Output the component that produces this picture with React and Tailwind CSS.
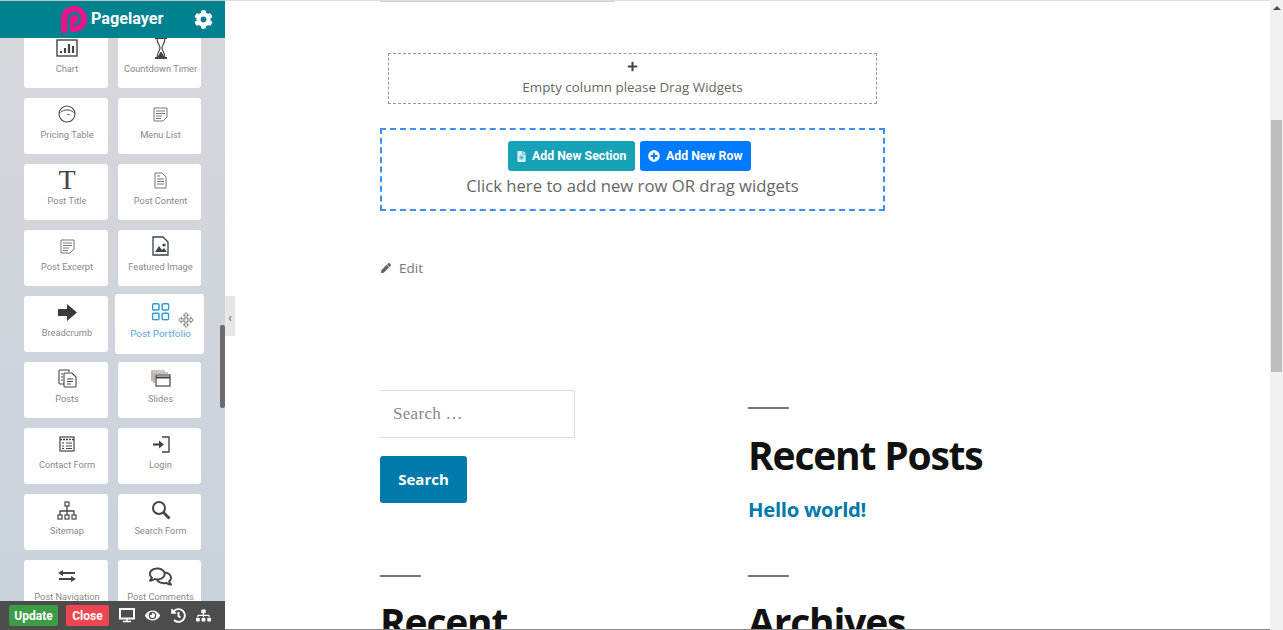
import React from "react";
import { FaCog, FaRegComments, FaEye, FaHistory, FaSitemap, FaPen, FaPlus, FaPlusCircle, FaFileAlt } from "react-icons/fa";

const Svg = ({ w = 24, h = 24, children, className = "text-[#444]" }) => (
  <svg width={w} height={h} viewBox={`0 0 ${w} ${h}`} fill="none" stroke="currentColor" className={className}>
    {children}
  </svg>
);

const ChartIcon = () => (
  <Svg w={22} h={18}>
    <rect x="1" y="1" width="20" height="16" strokeWidth="1.4" />
    <path d="M5 14v-2M9 14V9M13 14V5M17 14V7" strokeWidth="2.2" />
  </Svg>
);
const HourglassIcon = () => (
  <Svg w={14} h={22}>
    <path d="M1 1h12M1 21h12" strokeWidth="2" />
    <path d="M3 1c0 6 3 7 3 10s-3 4-3 10M11 1c0 6-3 7-3 10s3 4 3 10" strokeWidth="1.2" />
    <path d="M4 20l3-5 3 5z" fill="currentColor" />
  </Svg>
);
const GaugeIcon = () => (
  <Svg w={18} h={18}>
    <circle cx="9" cy="9" r="8" strokeWidth="1.1" />
    <path d="M2.5 7.500C6 4 12 4 15.500 7.500" strokeWidth="1" />
    <path d="M9 9l3 1" strokeWidth="0.8" />
  </Svg>
);
const ListNoteIcon = () => (
  <Svg w={15} h={15} className="text-[#777]">
    <path d="M1 1h13v9l-4 4H1z" strokeWidth="1" />
    <path d="M3 4h9M3 6.500h9M3 9h6M3 11.500h5" strokeWidth="1" />
  </Svg>
);
const FileIcon = () => (
  <Svg w={13} h={17} className="text-[#777]">
    <path d="M1 1h7l4 4v11H1z" strokeWidth="1" />
    <path d="M3 7h7M3 9.500h7M3 12h7M3 4h3" strokeWidth="1" />
  </Svg>
);
const ImageFileIcon = () => (
  <Svg w={17} h={20}>
    <path d="M1 1h10l5 5v13H1z" strokeWidth="1.300" className="text-[#345]" />
    <path d="M3 16l4-6 3 4 2-2 3 4z" fill="currentColor" stroke="none" />
    <circle cx="12" cy="9" r="1.600" fill="currentColor" stroke="none" />
  </Svg>
);
const BlockArrowIcon = () => (
  <svg width="19" height="17" viewBox="0 0 19 17" fill="#3a3a3a">
    <path d="M0 5h9V0l10 8.500L9 17v-5H0z" />
  </svg>
);
const GridIcon = () => (
  <Svg w={17} h={17} className="text-[#2d9bdc]">
    <rect x="1" y="1" width="6" height="6" rx="1" strokeWidth="1.400" />
    <rect x="10" y="1" width="6" height="6" rx="1" strokeWidth="1.400" />
    <rect x="1" y="10" width="6" height="6" rx="1" strokeWidth="1.400" />
    <rect x="10" y="10" width="6" height="6" rx="1" strokeWidth="1.400" />
  </Svg>
);
const PostsIcon = () => (
  <Svg w={19} h={19}>
    <path d="M11 3V1H2a1 1 0 0 0-1 1v12a1 1 0 0 0 1 1h4" strokeWidth="1.100" />
    <path d="M7 4h7l4 4v9a1 1 0 0 1-1 1H7a1 1 0 0 1-1-1V5a1 1 0 0 1 1-1z" strokeWidth="1.100" />
    <path d="M9 10h6M9 12.500h6M9 15h4M3 5h2M3 8h2M3 11h2" strokeWidth="1" />
  </Svg>
);
const SlidesIcon = () => (
  <Svg w={20} h={17}>
    <path d="M1 11V1h13" strokeWidth="1.200" className="text-[#a8856c]" />
    <path d="M3 13V3h14" strokeWidth="1.200" className="text-[#888]" />
    <rect x="5" y="5" width="14" height="11" strokeWidth="1.200" />
    <path d="M5 7.500h14" strokeWidth="2" />
  </Svg>
);
const FormIcon = () => (
  <Svg w={16} h={16}>
    <rect x="1" y="1" width="14" height="14" strokeWidth="1.200" />
    <path d="M1 3.500h14" strokeWidth="1.600" strokeDasharray="2 1" />
    <path d="M3 7h2M7 7h6M3 10h2M7 10h6M3 12.500h2M7 12.500h6" strokeWidth="1" />
  </Svg>
);
const LoginIcon = () => (
  <Svg w={18} h={17}>
    <path d="M10 1h7v15h-7" strokeWidth="1.400" />
    <path d="M1 8.500h6" strokeWidth="2.200" />
    <path d="M7 4.500l5 4-5 4z" fill="currentColor" stroke="none" />
  </Svg>
);
const SitemapIcon = () => (
  <Svg w={20} h={19}>
    <rect x="8" y="1" width="4" height="4" strokeWidth="1.200" />
    <rect x="1" y="14" width="4" height="4" strokeWidth="1.200" />
    <rect x="8" y="14" width="4" height="4" strokeWidth="1.200" />
    <rect x="15" y="14" width="4" height="4" strokeWidth="1.200" />
    <path d="M10 5v9M3 14v-4h14v4" strokeWidth="1.300" />
  </Svg>
);
const SearchGlassIcon = () => (
  <Svg w={20} h={20}>
    <circle cx="8" cy="8" r="6" strokeWidth="2" />
    <path d="M12.500 12.500L18.500 18.500" strokeWidth="2.800" />
  </Svg>
);
const SwapIcon = () => (
  <Svg w={18} h={12}>
    <path d="M5 3h12M1 9h12" strokeWidth="2" />
    <path d="M5 0L0 3l5 3zM13 6l5 3-5 3z" fill="currentColor" stroke="none" />
  </Svg>
);
const Logo = () => (
  <svg width="26" height="27" viewBox="0 0 26 27">
    <circle cx="13" cy="13" r="13" fill="#e9148c" />
    <rect x="0" y="13" width="6.500" height="14" rx="1" fill="#e9148c" />
    <path d="M7.800 27V13a5.500 5.500 0 1 1 5.500 5.500" fill="none" stroke="#00818f" strokeWidth="2.800" />
  </svg>
);
const MoveCursor = () => (
  <svg width="16" height="16" viewBox="0 0 16 16" fill="#fff" stroke="#555" strokeWidth="0.800">
    <path d="M8 .6l2.600 2.800H9v3.600h3.600V5.400L15.400 8l-2.800 2.600V9H9v3.600h1.600L8 15.400l-2.600-2.800H7V9H3.400v1.600L.6 8l2.800-2.600V7H7V3.400H5.400z" />
  </svg>
);

const widgets = [
  { label: "Chart", icon: <ChartIcon /> },
  { label: "Countdown Timer", icon: <HourglassIcon /> },
  { label: "Pricing Table", icon: <GaugeIcon /> },
  { label: "Menu List", icon: <ListNoteIcon /> },
  { label: "Post Title", icon: <span className="font-['Liberation_Serif'] text-[28px] leading-6 text-[#444]">T</span> },
  { label: "Post Content", icon: <FileIcon /> },
  { label: "Post Excerpt", icon: <ListNoteIcon /> },
  { label: "Featured Image", icon: <ImageFileIcon /> },
  { label: "Breadcrumb", icon: <BlockArrowIcon /> },
  { label: "Post Portfolio", icon: <GridIcon />, active: true },
  { label: "Posts", icon: <PostsIcon /> },
  { label: "Slides", icon: <SlidesIcon /> },
  { label: "Contact Form", icon: <FormIcon /> },
  { label: "Login", icon: <LoginIcon /> },
  { label: "Sitemap", icon: <SitemapIcon /> },
  { label: "Search Form", icon: <SearchGlassIcon /> },
  { label: "Post Navigation", icon: <SwapIcon /> },
  { label: "Post Comments", icon: <FaRegComments size={23} className="text-[#444]" /> },
];

const Sidebar = () => (
  <aside className="relative w-[225px] h-[630px] shrink-0 flex flex-col bg-gradient-to-b from-[#d6d8db] to-[#c9d2dc] font-['Roboto',sans-serif]">
    <header className="h-[38px] shrink-0 bg-[#00818f] border-t border-[#b9c4c6] flex items-center pl-[61px] pr-[12px] relative z-10">
      <Logo />
      <span className="ml-[4px] text-[16.200px] font-bold text-white leading-none">Pagelayer</span>
      <FaCog size={19} className="ml-auto text-white" />
    </header>
    <div className="flex-1 overflow-hidden">
      <div className="grid grid-cols-[84px_83px] gap-[10px] pl-6 mt-[-6px]">
        {widgets.map((w) => (
          <div
            key={w.label}
            className={`h-14 bg-white rounded-[3px] flex flex-col items-center pt-[4px] pl-[2px] ${w.active ? "scale-[1.07] text-[#5aa5da]" : "text-[#8a8a8a]"}`}
          >
            <div className="h-6 flex items-center justify-center">{w.icon}</div>
            <span className="mt-[3.500px] text-[9.250px] leading-[10px] whitespace-nowrap">{w.label}</span>
          </div>
        ))}
      </div>
    </div>
    <footer className="h-[29px] shrink-0 bg-[#4d4d4d] flex items-center pl-[9px] text-white">
      <button className="h-[21px] w-[49px] bg-[#3d9c46] rounded-[2px] text-[12px] font-bold">Update</button>
      <button className="ml-2 h-[21px] w-[43px] bg-[#ef4550] rounded-[2px] text-[12px] font-bold">Close</button>
      <svg width="16" height="15" viewBox="0 0 16 15" fill="none" stroke="#fff" className="ml-[10px]">
        <rect x="1" y="1" width="14" height="9.500" strokeWidth="2" />
        <path d="M8 11v2M4 13.500h8" strokeWidth="1.500" />
      </svg>
      <FaEye size={15} className="ml-[10px]" />
      <FaHistory size={15} className="ml-[11px]" />
      <FaSitemap size={15} className="ml-[10px]" />
    </footer>
    {/* sidebar scroll thumb */}
    <div className="absolute left-[220px] top-[325px] w-[5px] h-[83px] bg-[#6b6b6b] rounded-[2px]" />
    {/* collapse handle */}
    <div className="absolute left-[225px] top-[296px] w-[10px] h-[40px] bg-[#e4e6e8] flex items-center justify-center pt-[3px] text-[#3f5a78] text-[12px] z-10">‹</div>
    <div className="absolute left-[178px] top-[312px] z-20">
      <MoveCursor />
    </div>
  </aside>
);

const Rule = () => <div className="w-[41px] h-[2px] bg-[#767676]" />;

const Main = () => (
  <main className="flex-1 h-[630px] overflow-hidden bg-white border-t border-b border-t-[#ddd] border-b-[#888] font-['Open_Sans',sans-serif] pl-[155px]">
    <div className="w-[235px] h-px bg-[#c8d2da]" />
    <div className="w-[505px] mt-[51px]">
      <div className="ml-2 w-[489px] h-[51px] border border-dashed border-[#999] flex flex-col items-center pt-[6px] text-[#666]">
        <FaPlus size={11} className="text-[#444] mt-[1px]" />
        <span className="mt-[6px] text-[13.400px] leading-[18px]">Empty column please Drag Widgets</span>
      </div>
      <div className="mt-6 h-[83px] border-2 border-dashed border-[#3f8ff0] flex flex-col items-center pt-[10px]">
        <div className="flex gap-[5px] text-white text-[12.300px] font-['Roboto',sans-serif] font-bold mr-[6px] mt-px">
          <button className="h-[30px] w-[127px] bg-[#17a2b8] rounded-[3px] flex items-center pl-[8px] gap-[5px]">
            <FaFileAlt size={11} className="text-[#d8f0f4]" />
            Add New Section
          </button>
          <button className="h-[30px] w-[111px] bg-[#007bff] rounded-[3px] flex items-center pl-[8px] gap-[6px]">
            <FaPlusCircle size={12} />
            Add New Row
          </button>
        </div>
        <p className="mt-[3px] text-[16.700px] leading-[24px] text-[#666]">Click here to add new row OR drag widgets</p>
      </div>
      <div className="mt-[48px] ml-px flex items-center text-[#767676] text-[13.500px] leading-[18px]">
        <FaPen size={10} className="text-[#666]" />
        <span className="ml-2">Edit</span>
      </div>
    </div>
    <div className="grid grid-cols-[368px_1fr] mt-[113px]">
      <div>
        <div className="w-[195px] h-12 border border-l-0 border-[#ddd] flex items-center pl-[13px] font-['Liberation_Serif',serif] text-[17px] tracking-[0.3px] text-[#888]">
          Search …
        </div>
        <button className="mt-[18px] w-[87px] h-[47px] bg-[#007aaa] rounded-[3px] text-white text-[15px] font-bold">Search</button>
        <div className="mt-[72px]">
          <Rule />
          <h2 className="mt-[19px] text-[39px] leading-[52px] font-bold text-[#111] tracking-[-1.200px]">Recent</h2>
        </div>
      </div>
      <div className="pt-[17px]">
        <Rule />
        <h2 className="mt-[20px] text-[39px] leading-[52px] font-bold text-[#111] tracking-[-1.200px]">Recent Posts</h2>
        <a className="block mt-[14px] text-[20.300px] leading-[28px] font-bold text-[#007aaa] tracking-[-0.300px]">Hello world!</a>
        <div className="mt-[52px]">
          <Rule />
          <h2 className="mt-[19px] text-[39px] leading-[52px] font-bold text-[#111] tracking-[-1.200px]">Archives</h2>
        </div>
      </div>
    </div>
  </main>
);

const PageScrollbar = () => (
  <div className="w-[13px] h-[630px] shrink-0 bg-[#f1f1f1] flex flex-col">
    <div className="h-[120px] flex justify-center pt-[6px]">
      <div className="w-0 h-0 border-x-[4px] border-x-transparent border-b-[4px] border-b-[#505050]" />
    </div>
    <div className="ml-px w-[11px] h-[252px] bg-[#bdbdbd]" />
  </div>
);

export default function App() {
  return (
    <div className="flex w-[1283px] h-[630px] overflow-hidden">
      <Sidebar />
      <Main />
      <PageScrollbar />
    </div>
  );
}
